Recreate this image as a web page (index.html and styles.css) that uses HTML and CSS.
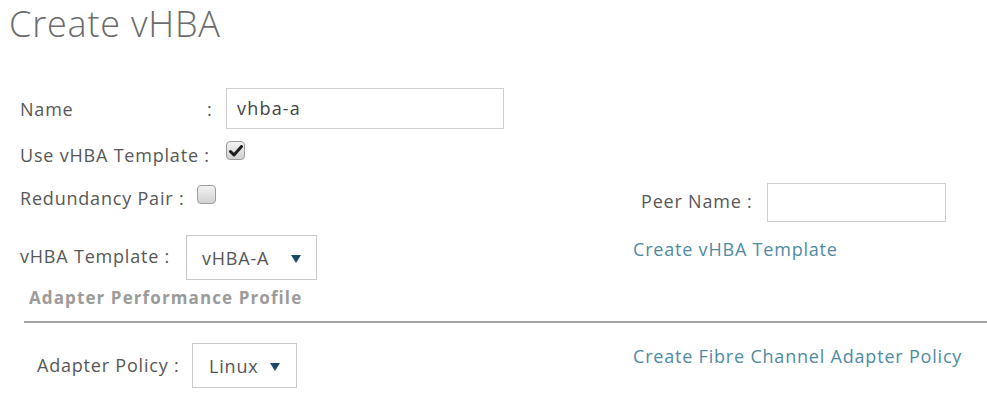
FILE: index.html
```html
<!DOCTYPE html>
<html lang="en">
<head>
  <meta charset="UTF-8" />
  <title>Create vHBA</title>
  <link rel="stylesheet" href="styles.css">
</head>
<body>

  <h1 class="page-title">Create vHBA</h1>

  <div class="form">
    <div class="row">
      <div class="cell">
        <span class="label name-label">Name</span>
        <span class="label">:</span>
        <div class="text-input name-input">vhba-a</div>
      </div>
    </div>

    <div class="row row-template">
      <div class="cell">
        <span class="label use-label">Use vHBA Template :</span>
        <span class="checkbox checked">
          <svg width="14" height="12" viewBox="0 0 14 12"><path d="M1.5 6.5 L5 10 L12.5 1.5" fill="none" stroke="#1e1e1e" stroke-width="3" stroke-linecap="round" stroke-linejoin="round"/></svg>
        </span>
      </div>
    </div>

    <div class="row row-redundancy">
      <div class="cell">
        <span class="label pair-label">Redundancy Pair :</span>
        <span class="checkbox"></span>
      </div>
      <div class="cell side">
        <span class="label peer-label">Peer Name :</span>
        <div class="text-input peer-input"></div>
      </div>
    </div>

    <div class="row row-select">
      <div class="cell">
        <span class="label tpl-label">vHBA Template :</span>
        <div class="select tpl-select">vHBA-A <span class="caret"></span></div>
      </div>
      <div class="cell">
        <a class="link link-top" href="#">Create vHBA Template</a>
      </div>
    </div>

    <div class="section-title">Adapter Performance Profile</div>
    <div class="divider"></div>

    <div class="row row-policy">
      <div class="cell">
        <span class="label policy-label">Adapter Policy :</span>
        <div class="select policy-select">Linux <span class="caret"></span></div>
      </div>
      <div class="cell">
        <a class="link link-policy" href="#">Create Fibre Channel Adapter Policy</a>
      </div>
    </div>
  </div>

</body>
</html>
```

FILE: styles.css
```css
body {
  margin: 0;
  font-family: 'Open Sans', 'Liberation Sans', sans-serif;
  font-size: 18px;
  letter-spacing: 0.8px;
  color: #575757;
  background: #fff;
}
.page-title {
  margin: 0;
  padding: 2px 0 0 9px;
  font-size: 36px;
  line-height: 44px;
  font-weight: 300;
  letter-spacing: 0.8px;
  color: #6b6b6b;
}
.form {
  padding-top: 42px;
}
.row {
  display: grid;
  grid-template-columns: 633px 1fr;
  align-items: start;
}
.cell {
  display: flex;
  align-items: flex-start;
}
.row > .cell:first-child {
  padding-left: 20px;
}
.label {
  line-height: 24px;
  white-space: nowrap;
}

/* name row */
.name-label {
  width: 187px;
  margin-top: 9px;
}
.name-label + .label {
  margin-top: 9px;
  width: 19px;
}
.text-input {
  box-sizing: border-box;
  border: 1px solid #cfcfcf;
  background: #fff;
  color: #444;
  line-height: 24px;
}
.name-input {
  width: 278px;
  height: 41px;
  padding: 7px 10px;
  letter-spacing: 1.2px;
}

/* checkboxes */
.row-template {
  margin-top: 14px;
}
.use-label {
  width: 206px;
}
.checkbox {
  box-sizing: border-box;
  width: 19px;
  height: 19px;
  border: 1px solid #9d9d9d;
  border-radius: 4px;
  background: linear-gradient(#f2f2f2, #d2d2d2);
  display: flex;
  align-items: center;
  justify-content: center;
}
.row-template .checkbox {
  margin-top: -2px;
}
.row-redundancy {
  margin-top: 16px;
}
.pair-label {
  width: 177px;
  margin-top: 3px;
}
.row-redundancy .checkbox {
  margin-top: 2px;
}
.side {
  padding-left: 8px;
}
.peer-label {
  width: 126px;
  margin-top: 6px;
}
.peer-input {
  width: 179px;
  height: 39px;
}

/* selects */
.row-select {
  margin-top: 13px;
}
.tpl-label {
  width: 166px;
  margin-top: 9px;
}
.select {
  box-sizing: border-box;
  border: 1px solid #c8c8c8;
  color: #555;
  line-height: 24px;
  display: flex;
  align-items: center;
  justify-content: space-between;
}
.tpl-select {
  width: 131px;
  height: 45px;
  padding: 0 15px;
}
.caret {
  width: 0;
  height: 0;
  border-left: 5px solid transparent;
  border-right: 5px solid transparent;
  border-top: 8px solid #1d4a69;
  margin-top: 2px;
}
.link {
  color: #4e8ba4;
  text-decoration: none;
  line-height: 24px;
}
.link-top {
  margin-top: 2px;
}

.section-title {
  margin: 7px 0 0 29px;
  font-size: 17px;
  line-height: 22px;
  font-weight: 700;
  letter-spacing: 1.1px;
  color: #9b9b9b;
}
.divider {
  margin: 12px 0 0 24px;
  height: 2px;
  background: #a3a3a3;
}

.row-policy {
  margin-top: 20px;
}
.row-policy > .cell:first-child {
  padding-left: 37px;
}
.policy-label {
  width: 155px;
  margin-top: 10px;
}
.policy-select {
  width: 105px;
  height: 45px;
  padding: 0 16px;
}
.link-policy {
  margin-top: 1px;
}
```
